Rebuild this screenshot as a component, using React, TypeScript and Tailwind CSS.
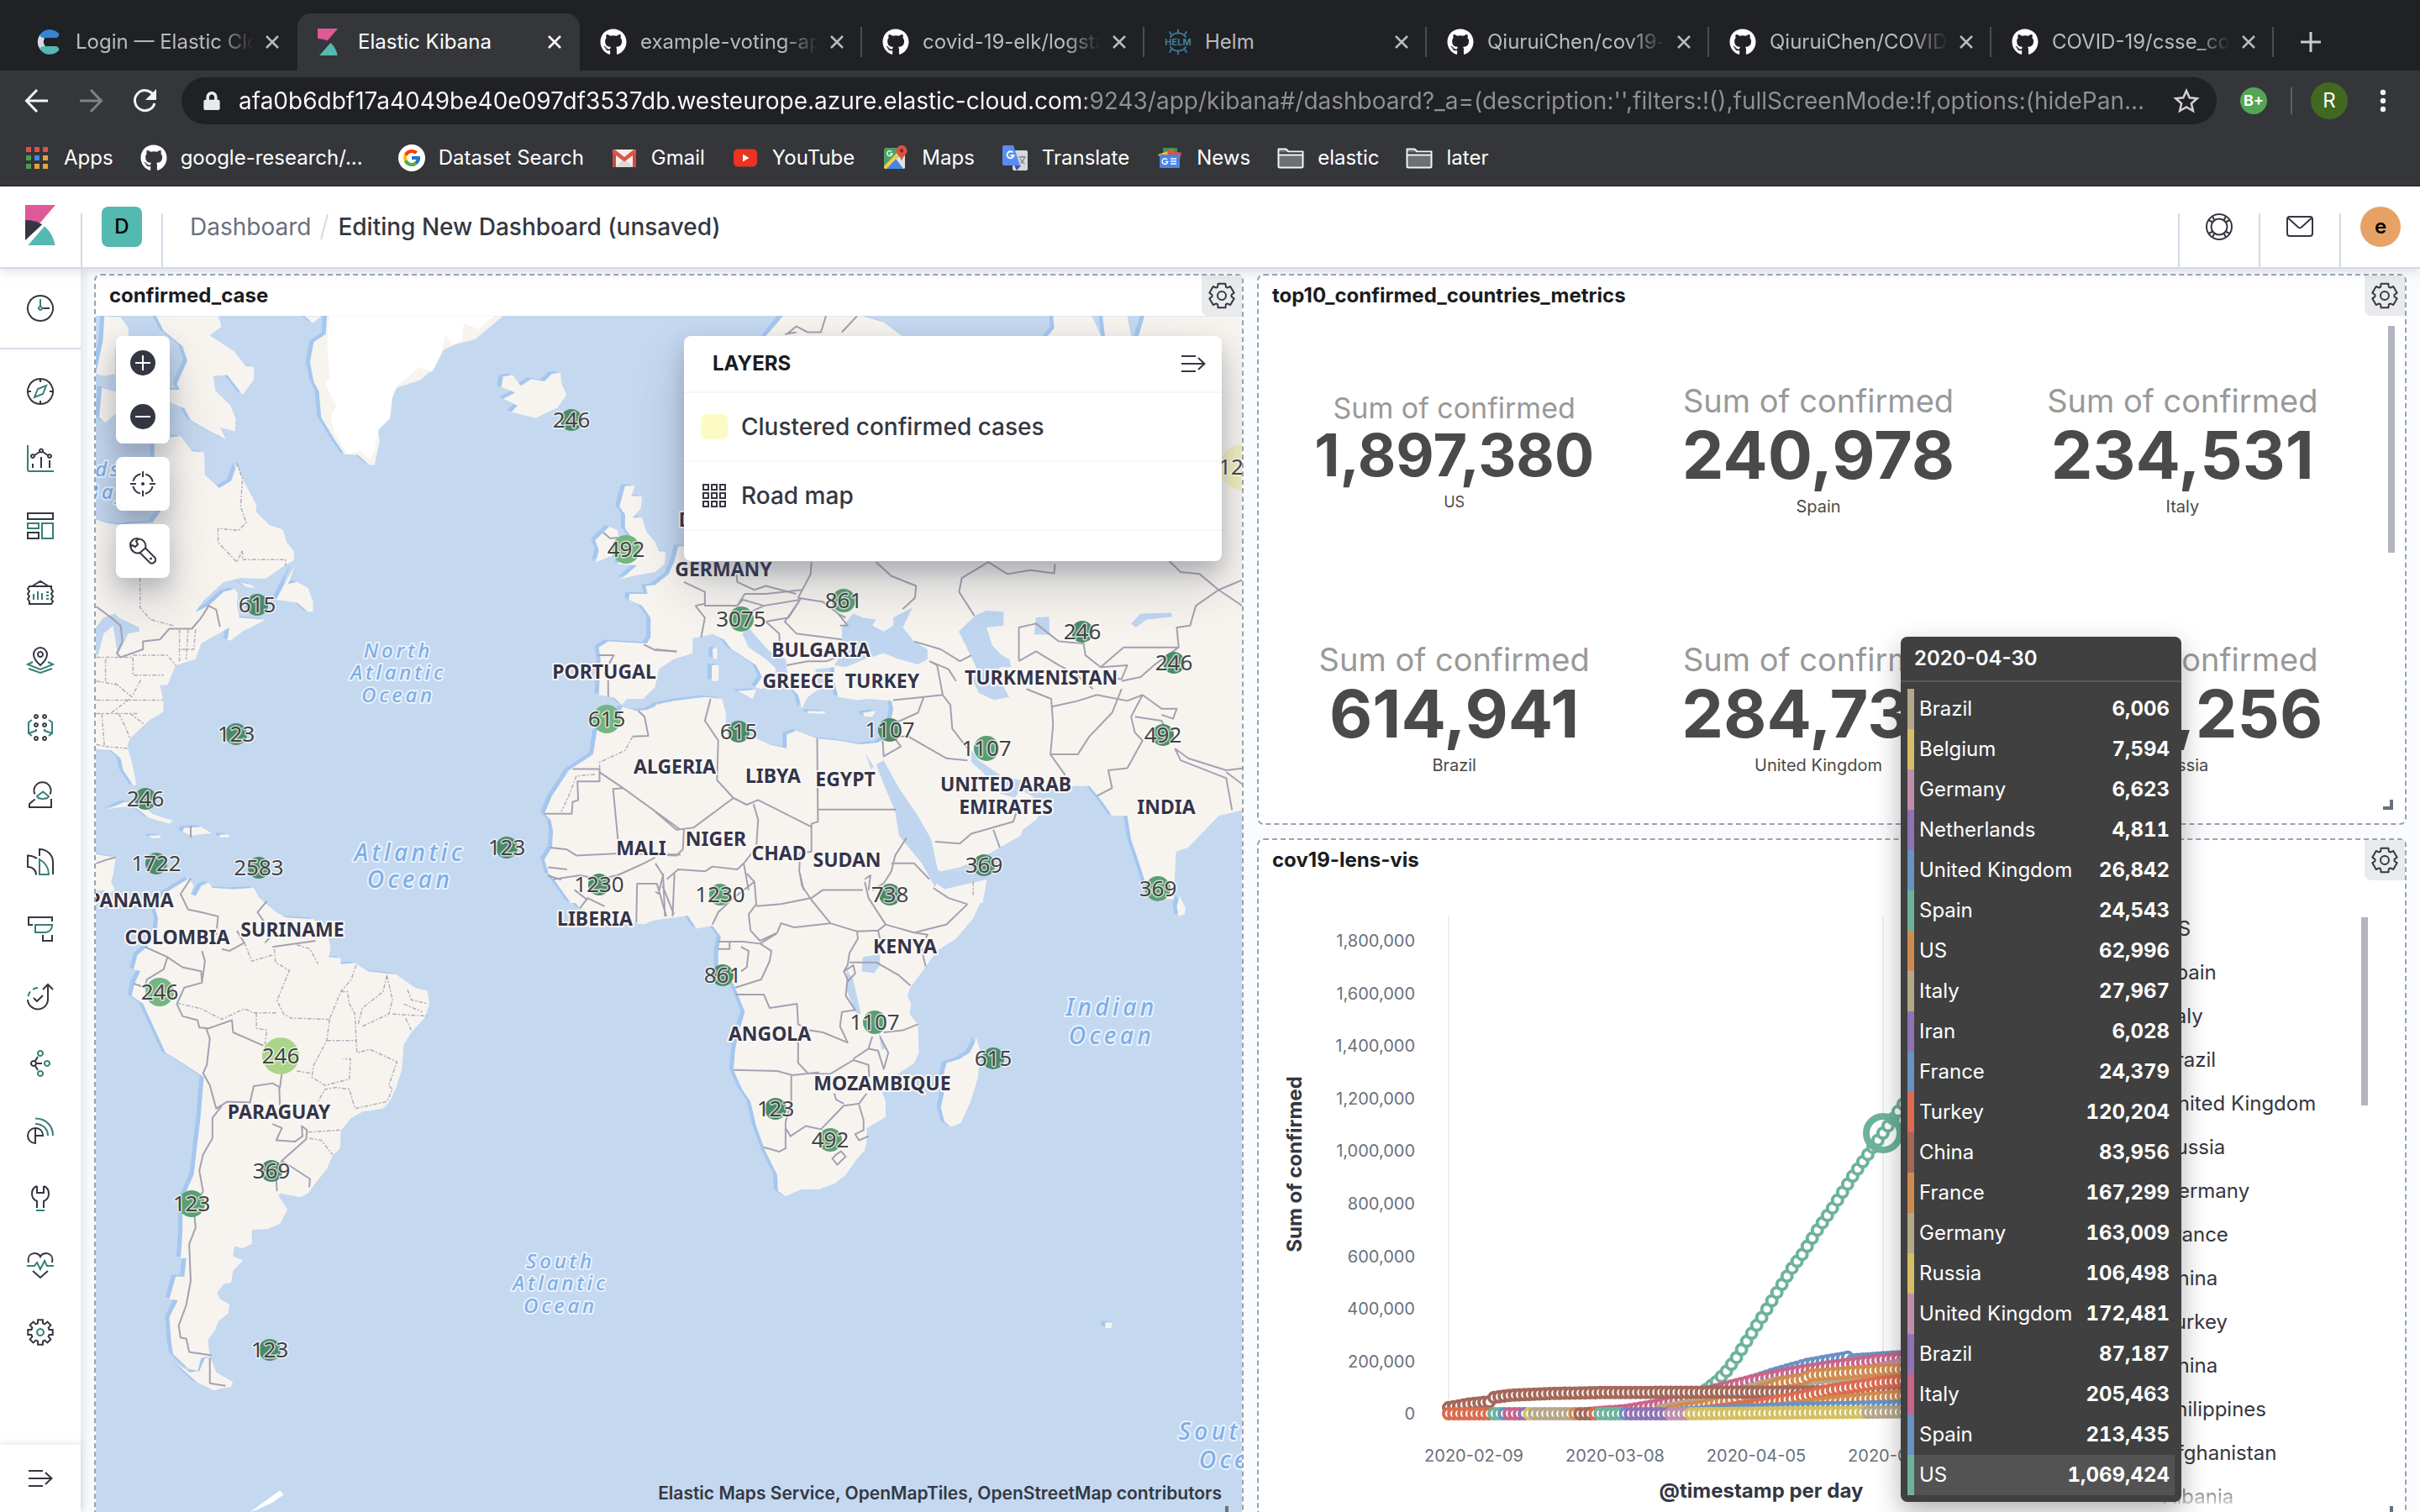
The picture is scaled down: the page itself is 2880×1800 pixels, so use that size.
import React from "react";
import { FaGithub, FaLock } from "react-icons/fa";
import { FcGoogle } from "react-icons/fc";

type Pt = [number, number];

/* ---------- browser chrome icons ---------- */

function KibanaMark({ className }: { className: string }) {
  return (
    <svg className={className} viewBox="0 0 24 32" aria-hidden="true">
      <path d="M0 0h24L0 28z" fill="#df5998" />
      <path d="M0 12v16l13.500-12.500C9.800 13.200 5 12 0 12z" fill="#343741" />
      <path d="M15.300 17L2.200 32h21.500c-1.200-6.300-4-11.500-8.400-15z" fill="#54b9b0" />
      <path d="M14.200 15.500L1.200 31" stroke="currentColor" strokeWidth="1.200" />
    </svg>
  );
}

function CloudMark() {
  return (
    <svg className="h-8 w-8" viewBox="0 0 32 32" aria-hidden="true">
      <path d="M7 6a14 14 0 0 0 0 20l5-5a7 7 0 0 1-1-9z" fill="#d3dae6" />
      <path d="M6 7c5-8 17-7 22-1 1 2-1 5-4 5H10c-3 0-5-2-4-4z" fill="#3485d6" />
      <path d="M6 25c5 8 17 7 22 1 1-2-1-5-4-5H10c-3 0-5 2-4 4z" fill="#54b9b0" />
    </svg>
  );
}

function HelmMark() {
  return (
    <svg className="h-8 w-8" viewBox="0 0 32 32" aria-hidden="true">
      <g fill="none" stroke="#3f7d9f" strokeWidth="1.800" strokeLinecap="round">
        <path d="M7 10a11 11 0 0 1 18 0M7 22a11 11 0 0 0 18 0" />
        <path d="M16 5V1.500M8 7L6 4M24 7l2-3M16 27v3.500M8 25l-2 3M24 25l2 3" />
      </g>
      <text x="16" y="20" textAnchor="middle" fontSize="11" fontWeight="700" fill="#3f7d9f" fontFamily="Inter, sans-serif">HELM</text>
    </svg>
  );
}

function AppsMark() {
  const c = ["#dd5144", "#dd5144", "#dd5144", "#4f9d55", "#4a86e8", "#e5a33b", "#4f9d55", "#e5a33b", "#e5a33b"];
  return (
    <svg className="h-8 w-8" viewBox="0 0 32 32" aria-hidden="true">
      {c.map((f, i) => (
        <rect key={i} x={3 + (i % 3) * 10} y={3 + Math.floor(i / 3) * 10} width="6" height="6" fill={f} />
      ))}
    </svg>
  );
}

function GmailMark() {
  return (
    <svg className="h-8 w-8" viewBox="0 0 32 32" aria-hidden="true">
      <rect x="2" y="6" width="28" height="21" rx="2" fill="#f1efee" />
      <path d="M16 17L27 27H5z" fill="#dcdad9" />
      <path d="M2 8v17a2 2 0 0 0 2 2h2V10zM30 8v17a2 2 0 0 1-2 2h-2V10z" fill="#d04a3c" />
      <path d="M2 7.500C2 5.500 4.500 5.500 6 7l10 8 10-8c1.500-1.500 4-1.500 4 .5L30 10 16 20.500 2 10z" fill="#dd5548" />
    </svg>
  );
}

function YouTubeMark() {
  return (
    <svg className="h-8 w-8" viewBox="0 0 32 32" aria-hidden="true">
      <rect x="2" y="5.500" width="28" height="21" rx="5" fill="#ea3323" />
      <path d="M13 11.500v9l7.500-4.500z" fill="#fff" />
    </svg>
  );
}

function MapsMark() {
  return (
    <svg className="h-8 w-8" viewBox="0 0 32 32" aria-hidden="true">
      <rect x="3" y="4" width="25" height="25" rx="2.500" fill="#4fa063" />
      <path d="M28 9v18a2 2 0 0 1-2 2L17 17z" fill="#e2e2e2" />
      <path d="M4 28.500L16 16l10 13H5z" fill="#4a86e8" />
      <path d="M3 26L22 6l3 3L6 29H5a2 2 0 0 1-2-2z" fill="#f4cf4b" />
      <path d="M24 1a6.500 6.500 0 0 1 6.500 6.500c0 4.500-5 6-6.500 12-1.500-6-6.500-7.500-6.500-12A6.500 6.500 0 0 1 24 1z" fill="#dd5144" />
      <circle cx="24" cy="7.500" r="2.200" fill="#802d27" />
      <path d="M12 8.500a3 3 0 1 0 .8 2.500H10" fill="none" stroke="#fff" strokeWidth="1.300" />
    </svg>
  );
}

function TranslateMark() {
  return (
    <svg className="h-8 w-8" viewBox="0 0 32 32" aria-hidden="true">
      <rect x="13" y="7" width="18" height="24" rx="2" fill="#d5d8dc" />
      <path d="M15 25h8l-5 6z" fill="#3355b5" />
      <path d="M3 1h11l8 24H3a2 2 0 0 1-2-2V3a2 2 0 0 1 2-2z" fill="#5a8df0" />
      <path d="M13.500 9.500A4 4 0 1 0 14.500 13H10.500" fill="none" stroke="#fff" strokeWidth="1.800" />
      <path d="M20 15h9M24.500 13v2M27.500 15c-1 4-3 6-5 7.500M22 17c1 2.500 3 4.500 5.500 6" fill="none" stroke="#7d8a99" strokeWidth="1.300" />
    </svg>
  );
}

function NewsMark() {
  return (
    <svg className="h-8 w-8" viewBox="0 0 32 32" aria-hidden="true">
      <rect x="8" y="4" width="17" height="10" rx="1" fill="#3f8f56" />
      <path d="M2 12l17-6 3 8H4z" fill="#f0b83d" />
      <path d="M13 6l17 4-2 8-14-4z" fill="#dd5144" />
      <rect x="4" y="12" width="24" height="16" rx="1.500" fill="#4a86e8" />
      <path d="M13 18a3.300 3.300 0 1 0 .7 2.500H11" fill="none" stroke="#fff" strokeWidth="1.500" />
      <path d="M17 17h7M17 20h7M17 23h7" stroke="#fff" strokeWidth="1.500" />
    </svg>
  );
}

function FolderMark() {
  return (
    <svg className="h-8 w-8" viewBox="0 0 32 32" aria-hidden="true">
      <path d="M1.500 26V5.500h9l3 3h17V26a1.500 1.500 0 0 1-1.500 1.500H3A1.500 1.500 0 0 1 1.500 26z" fill="#6e6f72" stroke="#f1f3f4" strokeWidth="2" strokeLinejoin="round" />
      <path d="M2.500 9.500h27v3h-27z" fill="#35363a" />
      <path d="M2 12.500h28" stroke="#f1f3f4" strokeWidth="2" />
    </svg>
  );
}

function GoogleMark() {
  return (
    <span className="flex h-8 w-8 items-center justify-center rounded-full bg-white">
      <FcGoogle className="h-6 w-6" />
    </span>
  );
}

/* ---------- browser chrome ---------- */

const github = <FaGithub className="h-8 w-8 text-white" />;

const tabs: { title: string; icon: React.ReactNode; active?: boolean; line?: boolean }[] = [
  { title: "Login — Elastic Cloud", icon: <CloudMark /> },
  { title: "Elastic Kibana", icon: <KibanaMark className="h-8 w-6 text-[#35363a]" />, active: true },
  { title: "example-voting-app/", icon: github, line: true },
  { title: "covid-19-elk/logstash", icon: github, line: true },
  { title: "Helm", icon: <HelmMark />, line: true },
  { title: "QiuruiChen/cov19-elk", icon: github, line: true },
  { title: "QiuruiChen/COVID-19", icon: github, line: true },
  { title: "COVID-19/csse_covid", icon: github, line: true },
];

const bookmarks: { title: string; icon: React.ReactNode }[] = [
  { title: "Apps", icon: <AppsMark /> },
  { title: "google-research/...", icon: github },
  { title: "Dataset Search", icon: <GoogleMark /> },
  { title: "Gmail", icon: <GmailMark /> },
  { title: "YouTube", icon: <YouTubeMark /> },
  { title: "Maps", icon: <MapsMark /> },
  { title: "Translate", icon: <TranslateMark /> },
  { title: "News", icon: <NewsMark /> },
  { title: "elastic", icon: <FolderMark /> },
  { title: "later", icon: <FolderMark /> },
];

function TabStrip() {
  return (
    <div className="flex h-[84px] items-end bg-[#202124] pl-[18px]">
      {tabs.map((t) => (
        <div
          key={t.title}
          className={
            "relative flex h-[68px] w-[336px] items-center pl-6 pr-4 " +
            (t.active ? "rounded-t-2xl bg-[#35363a] text-white" : "text-[#b9bbbe]")
          }
        >
          <button className="flex min-w-0 flex-1 items-center gap-4">
            <span className="flex w-8 shrink-0 items-center">{t.icon}</span>
            <span
              className={
                "min-w-0 flex-1 overflow-hidden whitespace-nowrap text-left text-2xl " +
                (t.active || t.title === "Helm" ? "" : "[mask-image:linear-gradient(90deg,#000_80%,transparent)]")
              }
            >
              {t.title}
            </span>
          </button>
          <button aria-label={"Close " + t.title} className="flex w-9 justify-end pr-1">
            <svg className="h-5 w-5" viewBox="0 0 20 20" aria-hidden="true">
              <path d="M3 3l14 14M17 3L3 17" stroke="currentColor" strokeWidth="2.500" />
            </svg>
          </button>
          {t.line && <span className="absolute right-0 top-4 h-9 w-0.5 bg-[#4b4c50]" />}
        </div>
      ))}
      <button aria-label="New tab" className="ml-8 flex h-[68px] items-center text-[#c9cbce]">
        <svg className="h-6 w-6" viewBox="0 0 24 24" aria-hidden="true">
          <path d="M12 0v24M0 12h24" stroke="currentColor" strokeWidth="3" />
        </svg>
      </button>
    </div>
  );
}

function Toolbar() {
  return (
    <div className="flex h-[72px] items-center bg-[#35363a] pl-7 pr-7 text-white">
      <button aria-label="Back" className="w-16">
        <svg className="h-8 w-8" viewBox="0 0 32 32" aria-hidden="true">
          <path d="M29 16H4M16 3L3.500 16 16 29" fill="none" stroke="#f1f3f4" strokeWidth="3" />
        </svg>
      </button>
      <button aria-label="Forward" className="w-16">
        <svg className="h-8 w-8" viewBox="0 0 32 32" aria-hidden="true">
          <path d="M3 16h25M16 3l12.500 13L16 29" fill="none" stroke="#808184" strokeWidth="3" />
        </svg>
      </button>
      <button aria-label="Reload" className="w-15">
        <svg className="h-8 w-8" viewBox="0 0 32 32" aria-hidden="true">
          <path d="M26.500 9A12 12 0 1 0 28 19" fill="none" stroke="#f1f3f4" strokeWidth="3" />
          <path d="M30 2v13H17z" fill="#f1f3f4" />
        </svg>
      </button>
      <div className="flex h-14 flex-1 items-center rounded-full bg-[#202124] pl-6 pr-5">
        <FaLock className="h-[22px] w-6 shrink-0 text-[#e8eaed]" />
        <input
          aria-label="Address and search bar"
          className="ml-5 min-w-0 flex-1 bg-[linear-gradient(90deg,#ffffff_1008px,#8f9194_1008px)] bg-clip-text text-[28px] leading-[48px] text-transparent outline-none"
          defaultValue="afa0b6dbf17a4049be40e097df3537db.westeurope.azure.elastic-cloud.com:9243/app/kibana#/dashboard?_a=(description:'',filters:!(),fullScreenMode:!f,options:(hidePan..."
        />
        <button aria-label="Bookmark this page" className="ml-7">
          <svg className="h-8 w-8" viewBox="0 0 32 32" aria-hidden="true">
            <path d="M16 4l3.700 8.300 9 .9-6.800 6 2 8.800L16 23.400 8.100 28l2-8.800-6.800-6 9-.9z" fill="none" stroke="#d0d1d3" strokeWidth="2.500" />
          </svg>
        </button>
      </div>
      <button aria-label="Extension" className="ml-7 flex h-8 w-8 items-center justify-center rounded-full bg-[#55a556] text-lg font-bold">B+</button>
      <span className="ml-7 h-8 w-0.5 bg-[#5f6064]" />
      <button aria-label="Profile" className="ml-[22px] flex h-11 w-11 items-center justify-center rounded-full bg-[#41691f] text-2xl">R</button>
      <button aria-label="Menu" className="ml-[26px]">
        <svg className="h-8 w-8" viewBox="0 0 32 32" aria-hidden="true">
          <g fill="#f1f3f4">
            <circle cx="16" cy="6" r="3.200" />
            <circle cx="16" cy="16" r="3.200" />
            <circle cx="16" cy="26" r="3.200" />
          </g>
        </svg>
      </button>
    </div>
  );
}

function Bookmarks() {
  return (
    <div className="flex h-[66px] items-center gap-8 border-b-2 border-[#27252a] bg-[#35363a] pl-7 text-white">
      {bookmarks.map((b) => (
        <a
          key={b.title}
          href="#"
          className={"flex items-center gap-4 whitespace-nowrap text-2xl " + (b.title.endsWith("...") ? "pr-2.5" : "")}
        >
          {b.icon}
          {b.title}
        </a>
      ))}
    </div>
  );
}

/* ---------- Kibana shell ---------- */

function KibanaHeader() {
  return (
    <header className="relative z-10 flex h-[98px] border-b-2 border-[#d3dae6] bg-white shadow-[0_4px_12px_rgba(152,162,179,0.3)]">
      <a href="#" aria-label="Kibana home" className="flex w-24 justify-center pt-[22px]">
        <KibanaMark className="h-12 w-9 text-white" />
      </a>
      <span className="mt-8 w-0.5 bg-[#d3dae6]" />
      <div className="flex w-[94px] justify-center pt-6">
        <button aria-label="Spaces" className="h-12 w-12 rounded-lg bg-[#54b9b0] text-2xl font-medium text-black">D</button>
      </div>
      <span className="mt-8 w-0.5 bg-[#d3dae6]" />
      <nav aria-label="Breadcrumb" className="flex h-24 flex-1 items-center gap-2.5 pl-8 text-[28px]">
        <a href="#" className="text-[#69707d]">Dashboard</a>
        <svg className="h-8 w-3" viewBox="0 0 12 32" aria-hidden="true">
          <path d="M10 1L2 31" stroke="#d3dae6" strokeWidth="2" />
        </svg>
        <span className="font-medium text-[#343741]">Editing New Dashboard (unsaved)</span>
      </nav>
      <span className="mt-8 w-0.5 bg-[#d3dae6]" />
      <button aria-label="Help" className="flex w-[94px] items-center justify-center">
        <svg className="h-8 w-8" viewBox="0 0 32 32" aria-hidden="true">
          <g fill="none" stroke="#343741" strokeWidth="2">
            <circle cx="16" cy="16" r="15" />
            <circle cx="16" cy="16" r="9.500" />
            <path d="M3.500 8l5 2.500M8 3.500l2.500 5M28.500 8l-5 2.500M24 3.500l-2.500 5M3.500 24l5-2.500M8 28.500l2.500-5M28.500 24l-5-2.500M24 28.500l-2.500-5" />
          </g>
        </svg>
      </button>
      <span className="mt-8 w-0.5 bg-[#d3dae6]" />
      <button aria-label="Newsfeed" className="flex w-[94px] items-center justify-center">
        <svg className="h-8 w-8" viewBox="0 0 32 32" aria-hidden="true">
          <g fill="none" stroke="#343741" strokeWidth="2">
            <rect x="1" y="4" width="30" height="23" rx="3" />
            <path d="M2 5.500L14 16.500c1.200 1 2.800 1 4 0L30 5.500" />
          </g>
        </svg>
      </button>
      <span className="mt-8 w-0.5 bg-[#d3dae6]" />
      <div className="flex w-[94px] items-center justify-center">
        <button aria-label="Account menu" className="h-12 w-12 rounded-full bg-[#e7a366] text-2xl font-semibold text-black">e</button>
      </div>
    </header>
  );
}

function gearPath(teeth: number, c: number, outer: number, inner: number, w: number, v: number) {
  let d = "";
  for (let i = 0; i < teeth; i++) {
    const a = (i * 360) / teeth - 90;
    const pts: Pt[] = [[a - v, inner], [a - w, outer], [a + w, outer], [a + v, inner]];
    pts.forEach(([deg, r]) => {
      const t = (deg * Math.PI) / 180;
      d += (d ? "L" : "M") + (c + r * Math.cos(t)).toFixed(1) + " " + (c + r * Math.sin(t)).toFixed(1);
    });
  }
  return d + "Z";
}

const panelGear = gearPath(6, 16, 15, 11.5, 17, 25);
const navGear = gearPath(8, 16, 15, 11, 11, 16);

const navIcons: { label: string; dark: string; teal: string }[] = [
  { label: "Discover", dark: "M16 1a15 15 0 1 0 .01 0M16 1v4M16 27v4M1 16h4M27 16h4", teal: "M9 23l4-10 10-4-4 10z" },
  { label: "Visualize", dark: "M7 22v5M17 14v13M27 18v9M9 12l6-4M19 8l6 4M7 11a2 2 0 1 0 .01 0M17 4.500a2 2 0 1 0 .01 0M27 11a2 2 0 1 0 .01 0", teal: "M1 0v29a2 2 0 0 0 2 2h29" },
  { label: "Dashboard", dark: "M1 1h30v7H1zM1 24h13v7H1z", teal: "M1 13h13v6H1zM18 13h13v18H18z" },
  { label: "Canvas", dark: "M3 8h26v3l2 3-2 3 2 3-2 3 2 3-2 3H3v-3l-2-3 2-3-2-3 2-3-2-3zM6 8l10-6 10 6", teal: "M8 17v7M13 14v10M18 16v8M23 15h3M23 19h3M23 23h3" },
  { label: "Maps", dark: "M16 1a8 8 0 0 1 8 8c0 6-8 13-8 13S8 15 8 9a8 8 0 0 1 8-8zM16 6a3 3 0 1 0 .01 0", teal: "M7 18l-6 3 15 6 15-6-6-3M2 26l14 5 14-5" },
  { label: "Machine Learning", dark: "M11 1a2 2 0 1 0 .01 0M21 1a2 2 0 1 0 .01 0M11 11a2 2 0 1 0 .01 0M21 11a2 2 0 1 0 .01 0M11 27a2 2 0 1 0 .01 0M21 27a2 2 0 1 0 .01 0", teal: "M6 7l-4 3v13l4 3M2 23l9-3v-2M26 7l4 3v13l-4 3M30 23l-9-3v-2" },
  { label: "Metrics", dark: "M9.500 15.500a10 10 0 1 1 18 0M9.500 21.500L3 27v4h26V21", teal: "M12 18l7-5.500 7 5.500c-2 4-12 4-14 0z" },
  { label: "Logs", dark: "M15 9V1c9 0 16 7 16 15v15M12 12C9 10 5 8.500 1 8.500V22c6 0 10 4 10 9.500", teal: "M15 13c7 4 11 10 11 18H15z" },
  { label: "APM", dark: "M7 11H2V2h28v5M19 23v7h11v-7", teal: "M10 11h20c0 6-4 9-9 9H10z" },
  { label: "Uptime", dark: "M1 20a12 12 0 0 0 24-1V2M19 8l6-6 6 6M8 18l4 4 7-7", teal: "M1.500 16c.3-2 1-4 2.500-5.500M7 8c2-1.500 4-2 6-2" },
  { label: "Graph", dark: "M8 13a3 3 0 1 0 .01 0M11 16h7M10 13l3-5M10 19l3 5", teal: "M16 1a3 3 0 1 0 .01 0M24 13a3 3 0 1 0 .01 0M16 25a3 3 0 1 0 .01 0" },
  { label: "SIEM", dark: "M10 13v18a9 9 0 1 1 0-18c6 0 9 4 9 9H10", teal: "M10 8c9 0 15 6 15 14M10 1.500c13 0 21 9 21 20.500" },
  { label: "Dev Tools", dark: "M12 2C4 5 4 17 12 20v8M20 2c8 3 8 15 0 18v8M12 2v8h8V2", teal: "M11 31h10" },
  { label: "Stack Monitoring", dark: "M2 13C-1 1 13-1 16 6 19-1 33 1 30 13M7 23l9 8 9-8", teal: "M0 17h9l3-4 4 8 5-10 3 6h8" },
  { label: "Management", dark: navGear, teal: "M16 12a4 4 0 1 0 .01 0" },
];

function NavIcon({ dark, teal }: { dark: string; teal: string }) {
  return (
    <svg className="h-8 w-8 overflow-visible" viewBox="0 0 32 32" fill="none" strokeWidth="2" aria-hidden="true">
      <path d={dark} stroke="#343741" />
      <path d={teal} stroke="#387f78" />
    </svg>
  );
}

function CollapseIcon({ className }: { className: string }) {
  return (
    <svg className={className} viewBox="0 0 32 32" fill="none" stroke="#343741" strokeWidth="2" aria-hidden="true">
      <path d="M2 7h17M2 16h27M2 25h17M22 9l7.500 7L22 23" />
    </svg>
  );
}

function Sidebar() {
  return (
    <aside className="z-[5] flex w-24 shrink-0 flex-col bg-white shadow-[4px_0_10px_rgba(152,162,179,0.25)]">
      <button aria-label="Recently viewed" className="flex h-24 items-center justify-center border-b-2 border-[#d8dde8]">
        <NavIcon dark="M16 1a15 15 0 1 0 .01 0M18 16h9" teal="M16 5v9a2 2 0 1 0 .01 0M18 16h2" />
      </button>
      <nav aria-label="Primary" className="flex flex-1 flex-col pt-[10px]">
        {navIcons.map((n) => (
          <a key={n.label} href="#" aria-label={n.label} className="flex h-20 items-center justify-center">
            <NavIcon dark={n.dark} teal={n.teal} />
          </a>
        ))}
      </nav>
      <button aria-label="Expand navigation" className="flex h-20 items-center justify-center shadow-[0_-2px_6px_rgba(152,162,179,0.25)]">
        <CollapseIcon className="h-8 w-8" />
      </button>
    </aside>
  );
}

function Panel({ title, className, children }: { title: string; className: string; children: React.ReactNode }) {
  return (
    <section className={"relative flex flex-col rounded-lg border-2 border-dashed border-[#98a2b3] bg-white " + className}>
      <div className="flex h-12 shrink-0 items-stretch justify-between pl-4">
        <h2 className="text-2xl font-bold leading-[48px] text-[#1a1c21]">{title}</h2>
        <button aria-label={"Options for " + title} className="flex w-12 items-center justify-center rounded-bl-lg bg-[#e9eaec]">
          <svg className="h-8 w-8" viewBox="0 0 32 32" fill="none" stroke="#343741" strokeWidth="2" strokeLinejoin="round" aria-hidden="true">
            <path d={panelGear} />
            <circle cx="16" cy="16" r="5" />
          </svg>
        </button>
      </div>
      {children}
    </section>
  );
}

/* ---------- map ---------- */

const T_NW = "translate(110 320) scale(0.4464 0.4719)";
const T_NE = "translate(780 320) scale(0.4529 0.4719)";
const T_SW = "translate(110 1040) scale(0.4464 0.4847)";
const T_SE = "translate(780 1040) scale(0.4529 0.4847)";

const land: [string, string][] = [
  [T_NW, "M170 119L190 157L240 195L253 232L225 290L233 305L205 305L205 337L245 352L262 382L310 408L356 430L340 400L380 410L382 378L368 345L328 308L322 270L360 268L400 318L430 280L431 248L408 245L378 208L312 168L344 146L336 119Z"],
  [T_NW, "M32 119L75 122L96 150L96 180L60 200L60 265L30 270L9 265L28 180ZM25 300L63 310L63 365L35 388L18 375Z"],
  [T_NW, "M9 632Q60 650 100 643L160 640L190 600L165 560L165 440L205 425L235 422L265 460L298 463L300 520L338 553L370 535L385 495L400 530L438 597L435 612L470 645L508 658L518 690L537 712L538 735L510 750L462 782L395 780L350 790L295 838L275 866L310 850L350 815L380 808L388 820L385 850L392 880L462 885L400 915L368 938L360 935L365 905L290 945L275 985L222 1000L200 1050L180 1050L189 1090L189 1118L150 1140L100 1185L93 1205L105 1245L117 1300L110 1305L82 1265L75 1235L50 1215L0 1210L0 632Z"],
  [T_NW, "M540 747L515 790L490 835L545 842L575 865L588 865L588 840L575 805L545 790L522 795ZM390 790L425 798L432 806L410 802Z"],
  [T_NW, "M38 1365L85 1345L130 1350L160 1375L215 1392L205 1400L150 1385L110 1355L60 1360ZM245 1410L290 1408L318 1424L262 1430L240 1420ZM340 1427h24v7h-24zM150 1430l30 0l3 6l-24 0zM0 1475L62 1485L55 1530L35 1560L55 1568L0 1568Z"],
  [T_NW, "M625 119L1095 119L1020 178L970 190L935 205L912 250L875 280L812 300L800 320L795 375L762 408L766 435L752 495L738 495L708 470L672 468L648 435L610 375L604 310L590 285L580 235L590 185L622 165ZM565 119L610 119L588 137Z"],
  [T_NW, "M1095 272L1120 268L1142 295L1170 278L1205 284L1225 265L1248 263L1250 288L1264 318L1240 350L1182 376L1117 362L1133 345L1095 328L1127 312L1090 298Z"],
  [T_NW, "M1420 548L1446 548L1437 572L1465 575L1462 605L1440 628L1465 628L1478 665L1500 690L1510 712L1528 715L1525 745L1500 765L1440 775L1410 783L1435 762L1452 748L1400 745L1430 715L1440 680L1420 655L1420 620L1405 600L1415 565ZM1378 650L1400 660L1405 690L1395 720L1342 740L1350 710L1340 685L1362 665Z"],
  [T_NW, "M1600 740L1568 762L1545 775L1530 795L1475 800L1480 820L1432 820L1430 835L1465 850L1488 880L1488 930L1478 945L1375 940L1350 955L1355 990L1350 1075L1390 1082L1412 1100L1425 1085L1468 1085L1500 1055L1510 1010L1550 985L1600 970Z"],
  [T_NW, "M1412 1105L1450 1115L1480 1112L1510 1100L1600 1088L1600 1600L1275 1600L1215 1520L1205 1490L1225 1460L1228 1420L1222 1390L1205 1375L1225 1330L1270 1265L1335 1225L1345 1165L1400 1140Z"],
  [T_NE, "M60 700L50 737L35 770L0 797L0 1012L15 985L50 972L70 935L110 930L150 922L180 935L200 960L240 985L265 1000L280 1030L262 1055L278 1060L310 1045L318 1000L345 1010L350 1050L375 1075L385 1110L400 1080L430 1060L420 1010L470 1005L470 1040L480 1080L530 1088L560 1085L620 1090L625 1110L610 1180L585 1195L540 1200L480 1190L425 1185L370 1165L345 1175L345 1210L300 1200L255 1180L185 1155L185 1120L175 1085L130 1080L50 1090L0 1100L0 1600L860 1600L870 1541L800 1550L760 1560L735 1530L738 1515L750 1520L800 1510L850 1490L905 1460L960 1430L965 1415L1000 1390L1012 1372L1020 1350L975 1322L985 1302L1070 1305L1140 1305L1175 1345L1200 1380L1240 1380L1250 1440L1275 1510L1300 1590L1362 1590L1368 1470L1400 1460L1480 1380L1545 1365L1545 700Z"],
  [T_NE, "M335 119L290 170L290 200L680 200L645 168L600 135L545 119ZM1045 119L1048 150L1030 170L1030 200L1185 200L1150 125L1145 119ZM1175 119L1185 200L1250 170L1240 119ZM1285 119L1260 200L1480 200L1480 740L1545 740L1545 119Z"],
  [T_NE, "M150 960l12 -5l0 30l-10 -2zM148 1000l18 0l0 40l-18 0zM215 1065L265 1062L255 1085ZM400 1115l45 2l0 6l-45 -2zM545 1120l35 -5l-10 15l-20 0zM0 710L27 722L10 750L0 755Z"],
  [T_SW, "M225 30L258 12L270 30L262 50L275 55L290 30L310 22L320 35L375 38L430 35L445 60L490 95L515 108L590 112L630 160L635 180L630 205L662 208L662 222L700 220L735 240L810 248L860 280L893 288L899 320L885 355L850 390L830 420L825 480L810 525L792 560L775 577L720 585L690 600L662 632L660 675L640 692L625 725L595 760L575 785L555 795L500 785L495 790L520 825L500 860L465 873L425 875L425 910L400 920L378 915L375 940L402 950L375 975L370 1005L350 1008L332 1030L340 1045L365 1058L362 1080L335 1100L328 1120L308 1145L312 1180L318 1185L290 1190L280 1222L255 1215L215 1180L210 1150L205 1090L228 1048L205 1045L222 990L245 990L250 945L235 945L240 880L240 800L270 740L280 660L288 600L297 500L240 465L195 440L165 380L135 320L105 300L112 270L128 240L110 235L120 200L145 180L172 140L175 110L165 80L190 50Z"],
  [T_SW, "M315 1190L330 1225L374 1248L370 1260L340 1265L325 1270L280 1250L225 1205L260 1225L285 1222L300 1190ZM0 0L55 0L50 20L60 40L40 50L20 30L0 20Z"],
  [T_SW, "M1215 0L1250 20L1275 60L1300 85L1380 120L1440 120L1470 125L1510 110L1580 98V-10H1215Z"],
  [T_SE, "M-6 -5L700 0L718 30L760 38L870 15L865 50L835 110L790 160L740 190L705 235L670 280L662 300L672 320L668 345L690 370L692 440L680 465L625 500L595 535L605 560L605 598L555 625L555 660L550 680L530 700L500 740L470 762L430 775L385 775L342 792L322 780L320 740L288 680L265 620L250 560L228 530L205 482L210 430L222 380L235 340L220 305L205 270L165 240L165 190L172 155L150 128L108 135L85 103L-6 115Z"],
  [T_SE, "M843 402L852 430L848 500L828 560L803 612L778 622L760 610L750 575L758 540L755 500L765 465L800 455L825 440L840 415ZM1378 55L1393 85L1390 100L1375 105L1370 80ZM1295 0L1310 50L1325 70L1345 60L1363 30L1362 0ZM1182 1102l18 2l-2 12l-16 0z"],
];

const ice: [string, string][] = [
  [T_NW, "M632 119L1070 119L1030 152L990 138L985 180L960 192L940 165L930 215L905 260L870 248L845 270L812 295L798 330L790 380L762 405L752 460L740 480L715 460L680 468L645 415L635 375L650 345L620 290L632 275L626 190Z"],
  [T_SW, "M420 1568L455 1545L500 1515L510 1525L480 1545L440 1562Z"],
];

const water: [string, string][] = [
  [T_NW, "M9 905L30 880L60 870L70 880L125 905L125 915L95 920L70 970L65 960L55 900L30 920L15 975L9 975Z"],
  [T_NE, "M490 905L520 870L545 880L580 885L570 900L600 915L625 900L625 880L675 855L660 885L650 905L680 940L715 960L715 985L690 998L640 985L600 970L550 985L500 1005L470 1000L490 970Z"],
  [T_NE, "M840 875L870 862L915 865L915 900L870 905L885 950L910 975L930 985L935 1005L905 1005L900 1030L930 1080L890 1088L850 1070L835 1040L845 1010L820 960L797 915ZM1000 880l35 -2l0 45l-40 0zM1250 895L1275 870L1355 868L1358 878L1290 885L1262 905Z"],
  [T_NE, "M580 1250L600 1240L640 1310L690 1380L725 1440L745 1530L735 1560L700 1500L640 1430L630 1370L600 1300ZM552 1222l22 35l-8 5z"],
  [T_NE, "M245 905L262 925L300 965L343 985L345 1020L318 1010L290 985L245 955L228 920ZM830 1215L850 1240L910 1280L960 1290L985 1302L978 1325L960 1312L945 1335L895 1320L860 1270L830 1245Z"],
  [T_SE, "M545 205L590 198L590 225L575 245L542 240ZM503 235L520 262L540 345L528 345L500 280ZM585 385L605 430L595 432Z"],
  [T_SE, "M735 0L870 -8L868 15L760 38L738 25Z"],
];

const borders: [string, string][] = [
  [T_NW, "M10 852L50 880L75 900L80 940L65 970L75 980L135 960L135 940L180 935L205 908L265 908L290 880L310 850L330 860L340 903M1205 1375L1278 1375L1280 1345L1295 1340L1293 1293L1352 1293L1352 1262L1280 1262M1352 1270L1415 1310L1568 1415M1402 1450L1388 1312L1415 1310M1455 1115L1472 1130L1482 1178L1440 1180M1350 975L1390 975L1375 1000L1375 1080M1470 948L1500 962L1558 965M1220 1460L1265 1465L1290 1480L1405 1475L1568 1478M1215 1510L1265 1515M1230 1540L1300 1530L1350 1540L1400 1530L1470 1500L1500 1485M1362 665L1380 680L1400 678M262 1405V1435M10 1500L40 1490L62 1485"],
  [T_NE, "M145 1085L130 1140L165 1190L162 1290L205 1335L100 1410L55 1415L0 1370M425 1185L427 1395L410 1400L410 1470L380 1475L378 1520L390 1568M205 1335L240 1352L270 1340L410 1408M427 1364L632 1364M258 1350L270 1390L265 1460L232 1500L215 1515L150 1508L130 1520L60 1515L30 1540M75 1415L72 1465L55 1480L0 1478M232 1500L245 1568M0 1500L20 1530L10 1568"],
  [T_NE, "M660 1435L630 1480L620 1520L600 1550L570 1568M620 1500L680 1500L720 1540M735 1445L800 1450L830 1425L940 1395L960 1340M888 1415L905 1460M625 1088L705 1080L755 1075L775 1100L780 1160L820 1210M705 1080L690 1120L620 1150L640 1180L665 1180L765 1235L820 1240M597 1190L600 1230L645 1205L625 1180M755 1075L740 1000L720 990M720 990L770 1010L790 1040M560 1568L565 1530L550 1540"],
  [T_NE, "M975 1060L1040 1085L1045 1150L1038 1225L1075 1275L1080 1305M1038 1225L1110 1225L1140 1180L1200 1120L1225 1060M1040 1105L1110 1090L1160 1075L1240 1090L1280 1075M955 990L955 905L1000 895L1060 940L1125 945L1130 975L1170 1005L1230 955L1310 955L1375 955L1370 905L1405 900L1420 850L1480 810L1542 850M955 990L1000 965L1060 1000L1100 1020L1150 1060M1170 1005L1240 1000L1225 1035L1180 1030M1225 1040L1275 1030L1310 1000L1375 955"],
  [T_NE, "M1350 737L1380 765L1430 770L1480 810L1542 785M838 875L798 815L805 780L875 740L925 770L985 760L1048 768L1050 745M580 740L620 775L685 800L682 830L650 858M410 740L408 770L375 830L440 840L480 870L500 880M75 790L130 815L130 850L215 850L235 820L290 820L385 810M105 850L130 880L120 930M105 850L130 845M285 850L380 835L350 880L290 890L325 920L330 980M380 835L340 890L370 920L490 935M345 1000L400 990L450 990L490 975M0 960L55 965M680 940L750 960L800 990L830 975M210 740L215 790L260 810L290 800L370 820M240 870L285 850L230 835L215 850"],
  [T_NE, "M480 870L505 900L485 900M345 165L370 145L400 160L435 160L448 119M530 119L490 160M340 165L370 160M1280 1075L1250 1130L1260 1170L1280 1190L1240 1260L1190 1265L1200 1310L1160 1330M1365 1210L1400 1235L1500 1265L1542 1260M1365 1210L1380 1240L1500 1285L1515 1365M1500 1270L1542 1300M1280 1075L1330 1110L1370 1110L1360 1135L1330 1125M1260 1130L1330 1140L1350 1180"],
  [T_SW, "M262 12L235 50L255 88L290 95L335 105L330 150M465 68L440 95L455 115L480 150L460 170M345 185L365 190L405 170L385 140M480 180L595 165M140 180L200 205L240 230L290 240L292 268L245 280L225 320L240 350L280 360L285 378L310 380L372 360L375 390L455 422M200 205L190 235L145 260L140 280L110 270M292 268L300 215L292 190M303 380L313 405L305 470L295 490L313 520L330 577L345 570L320 600L320 650L295 690L285 730L295 780L270 820L275 870L258 910L262 1000L250 1060L230 1110L235 1140L250 1142L258 1175L318 1183M313 1190V1252L355 1258M330 577L360 560L420 562L430 522L480 515L500 525L505 490M498 525L500 570M480 615L505 625L490 655L540 658L560 645L558 620L572 630L570 652L505 705L580 750L578 770M505 705L490 750L492 780"],
  [T_SW, "M1450 120L1452 25L1505 25L1530 105M1520 30L1550 100M1300 85L1320 60L1365 80M1285 40L1320 65M1215 5L1250 15"],
  [T_SE, "M20 0L25 105M50 0L45 105M0 45L10 50M150 125L165 95L205 60L260 20L240 0M260 20L265 75L245 100L250 140L275 165L320 145L330 122L365 132L460 122L410 65L385 30L380 0M460 122L530 142L585 140L605 125L560 60L550 20M265 80L330 75L410 60L440 40L545 40M605 125L680 145L765 125L820 75M730 35L770 60L820 75M680 145L715 150L698 180L710 228M585 140L590 160M530 142L532 160L510 195L505 225L495 240L505 260L500 300L525 335L490 340L485 375L505 415L440 390L405 385L375 370L372 320L300 330L285 297L210 297M510 218H580L640 250L670 275M165 167H230L275 172L318 148M275 172L305 190L300 215L278 260L210 280M165 185H195V168M225 180L245 190L240 230L225 240"],
  [T_SE, "M375 410V465L400 490L460 492L520 458L560 470L562 500M205 482L320 485L360 495L430 488M357 495L357 560L342 610L342 675L325 683L285 672M342 625L355 645L395 620L435 628L495 570L535 565L555 540M470 540L475 555L495 565M535 568L547 605L547 630L525 640L535 655L560 645M475 690L465 700L478 715L500 695L488 682ZM520 455L560 430L585 435L600 480L612 440L590 400M600 390L650 385L690 370M560 430L570 400M495 240L520 225L525 245L505 265"],
];

const dashed: [string, string][] = [
  [T_NW, "M127 780V855L155 885L215 900M385 490L400 530L395 600L410 640L390 660L335 655L335 690L385 740L400 710L400 734H515V750M10 980H108V1025H190M35 985V1040M10 1088H189M10 1122H120M25 1122L32 1205M108 975H200L222 1000M232 910V995M275 910L270 960L235 960M255 910L250 985M60 1045L105 1080L130 1035M10 1040L70 1050M10 1200L35 1205L93 1210M70 1122L90 1160L100 1185M100 1122L140 1150M50 1120L100 1085"],
  [T_NW, "M1440 1180L1420 1215L1352 1245V1262M1340 1275L1290 1280L1270 1330L1250 1370"],
  [T_SW, "M405 170L425 215L480 200M485 185L488 218L525 238L492 312L510 345L530 355L632 358M225 318L290 332L345 358L405 332L430 342H492M437 342V380L465 385L460 420M632 358L625 410L590 470L585 500L620 520L685 505L688 455H668M703 225L690 260L662 290L632 358M662 290L680 290L685 320L700 345L705 440L740 432L812 462L790 520L800 530L785 560L700 577L685 530L650 525L620 530L600 562M785 250L775 290L720 330L708 372M785 250L800 310L790 345L720 375M625 410H705M545 485L580 490M575 635L660 630M578 650L610 655L640 690M545 175L580 185L602 222M840 285L850 310L895 320M800 345L895 350M830 320L880 340M835 355L850 385"],
  [T_SE, "M835 20V55"],
];

const countries: [number, number, string][] = [
  [719, 800, "PORTUGAL"], [861, 678, "GERMANY"], [977, 774, "BULGARIA"], [950, 811, "GREECE"], [1050, 811, "TURKEY"],
  [1239, 807, "TURKMENISTAN"], [803, 913, "ALGERIA"], [920, 924, "LIBYA"], [1006, 928, "EGYPT"], [1197, 934, "UNITED ARAB"],
  [1197, 961, "EMIRATES"], [1388, 961, "INDIA"], [763, 1010, "MALI"], [852, 999, "NIGER"], [927, 1016, "CHAD"],
  [1008, 1024, "SUDAN"], [708, 1094, "LIBERIA"], [1077, 1127, "KENYA"], [916, 1231, "ANGOLA"], [1050, 1290, "MOZAMBIQUE"],
  [156, 1072, "PANAMA"], [211, 1116, "COLOMBIA"], [348, 1107, "SURINAME"], [332, 1324, "PARAGUAY"], [866, 619, "DENMARK"],
];

const oceans: [number, number, string, number][] = [
  [474, 774, "North", 24], [474, 800, "Atlantic", 24], [474, 827, "Ocean", 24],
  [488, 1015, "Atlantic", 28], [488, 1047, "Ocean", 28],
  [1323, 1199, "Indian", 28], [1323, 1233, "Ocean", 28],
  [667, 1501, "South", 24], [667, 1527, "Atlantic", 24], [667, 1554, "Ocean", 24],
  [1478, 1704, "Southern", 28], [1478, 1738, "Ocean", 28],
  [128, 558, "Hudson", 24], [128, 585, "Bay", 24],
];

const DK = "#4a8a69";
const MD = "#5a9f72";
const LT = "#74b581";

const clusters: [number, number, string, number, string][] = [
  [680, 500, "246", 13, DK], [745, 654, "492", 17, LT], [306, 720, "615", 13, DK], [1004, 715, "861", 14, MD],
  [882, 737, "3075", 15, MD], [1288, 752, "246", 13, DK], [1397, 789, "246", 13, DK], [722, 856, "615", 17, LT],
  [879, 871, "615", 13, DK], [1059, 869, "1107", 14, DK], [1174, 891, "1107", 15, MD], [1384, 875, "492", 13, DK],
  [281, 874, "123", 13, DK], [173, 951, "246", 13, DK], [186, 1028, "1722", 13, DK], [308, 1033, "2583", 13, DK],
  [603, 1009, "123", 13, DK], [713, 1053, "1230", 13, DK], [857, 1065, "1230", 13, MD], [1059, 1065, "738", 13, DK],
  [1171, 1030, "369", 13, DK], [1378, 1058, "369", 15, MD], [190, 1181, "246", 17, LT], [860, 1161, "861", 13, DK],
  [334, 1257, "246", 22, "#abd48a"], [1041, 1217, "1107", 14, MD], [1182, 1260, "615", 13, DK], [923, 1320, "123", 13, DK],
  [988, 1357, "492", 14, MD], [323, 1394, "369", 13, DK], [228, 1433, "123", 16, MD], [321, 1607, "123", 13, DK],
  [1480, 556, "1230", 28, "#f2efbe"],
];

function WorldMap() {
  return (
    <svg className="absolute inset-0 h-full w-full" viewBox="114 376 1364 1424" preserveAspectRatio="xMinYMin slice" role="img" aria-label="Map of clustered confirmed cases">
      <rect x="114" y="376" width="1364" height="1424" fill="#c4d8f0" />
      {land.map(([t, d], i) => (
        <g key={i} transform="translate(-5 -2)">
          <path transform={t} d={d} fill="#a5c7ef" />
        </g>
      ))}
      {land.map(([t, d], i) => (
        <path key={i} transform={t} d={d} fill="#f7f4ef" />
      ))}
      {ice.map(([t, d], i) => (
        <path key={i} transform={t} d={d} fill="#ffffff" />
      ))}
      {water.map(([t, d], i) => (
        <path key={i} transform={t} d={d} fill="#c0d6f0" />
      ))}
      {borders.map(([t, d], i) => (
        <path key={i} transform={t} d={d} fill="none" stroke="#a3a1b2" strokeWidth="2" strokeLinejoin="round" vectorEffect="non-scaling-stroke" />
      ))}
      {dashed.map(([t, d], i) => (
        <path key={i} transform={t} d={d} fill="none" stroke="#b1afbd" strokeWidth="1.500" strokeDasharray="5 2 2 2" vectorEffect="non-scaling-stroke" />
      ))}
      <g fontFamily="Noto Sans, sans-serif" textAnchor="middle" strokeLinejoin="round" style={{ paintOrder: "stroke" }}>
        {oceans.map(([x, y, t, s], i) => (
          <text key={i} x={x} y={y + s * 0.36} fontSize={s} fontStyle="italic" fontWeight="500" fill="#7eaee8" stroke="#eaf2fb" strokeWidth="4" className="tracking-[0.16em]">
            {t}
          </text>
        ))}
        {countries.map(([x, y, t]) => (
          <text key={t} x={x} y={y + 8} fontSize="23" fontWeight="700" fill="#34344a" stroke="#faf8f5" strokeWidth="4">
            {t}
          </text>
        ))}
        {clusters.map(([x, y, t, r, c], i) => (
          <g key={i}>
            <circle cx={x} cy={y} r={r} fill={c} />
            <text x={x} y={y + 9} fontSize="26" fill="#444444" stroke="#ffffff" strokeOpacity="0.7" strokeWidth="3">
              {t}
            </text>
          </g>
        ))}
      </g>
    </svg>
  );
}

const floatShadow = "shadow-[0_12px_24px_rgba(65,70,90,0.25),0_30px_60px_rgba(65,70,90,0.22)]";

function MapPanel() {
  return (
    <Panel title="confirmed_case" className="min-w-0 rounded-b-none border-b-0">
      <div className="relative flex-1 overflow-hidden">
        <WorldMap />
        <div className="absolute left-6 top-6 flex w-16 flex-col gap-4">
          <div className={"flex h-32 flex-col rounded-lg bg-white " + floatShadow}>
            <button aria-label="Zoom in" className="flex flex-1 items-center justify-center">
              <svg className="h-8 w-8" viewBox="0 0 32 32" aria-hidden="true">
                <circle cx="16" cy="16" r="15" fill="#343741" />
                <path d="M7 16h18M16 7v18" stroke="#fff" strokeWidth="2" />
              </svg>
            </button>
            <button aria-label="Zoom out" className="flex flex-1 items-center justify-center">
              <svg className="h-8 w-8" viewBox="0 0 32 32" aria-hidden="true">
                <circle cx="16" cy="16" r="15" fill="#343741" />
                <path d="M7 16h18" stroke="#fff" strokeWidth="2" />
              </svg>
            </button>
          </div>
          <button aria-label="Fit to data bounds" className={"flex h-16 items-center justify-center rounded-lg bg-white " + floatShadow}>
            <svg className="h-8 w-8" viewBox="0 0 32 32" fill="none" stroke="#343741" strokeWidth="2" aria-hidden="true">
              <circle cx="16" cy="16" r="12" strokeDasharray="12.850 6" strokeDashoffset="-3" />
              <path d="M16 1v7M16 24v7M1 16h7M24 16h7" />
              <circle cx="16" cy="16" r="2" fill="#343741" stroke="none" />
            </svg>
          </button>
          <button aria-label="Tools" className={"flex h-16 items-center justify-center rounded-lg bg-white " + floatShadow}>
            <svg className="h-8 w-8" viewBox="0 0 32 32" fill="none" stroke="#343741" strokeWidth="2" strokeLinejoin="round" aria-hidden="true">
              <path d="M11 1.500C5-.5-.5 5.500 1.500 11.500L3 9l4 2 3-3-2-4zM1.500 11.500C2.500 17 8 19.500 12.500 18L24 29.500c4 3.500 9.500-2 6-6L19 12.500C20.500 8 17.500 2 11 1.500" />
              <path d="M12.500 18l6.500-5.500" />
              <circle cx="25.500" cy="25" r="1.500" fill="#343741" stroke="none" />
            </svg>
          </button>
        </div>
        <div className={"absolute right-6 top-6 h-[268px] w-[640px] rounded-lg bg-white " + floatShadow}>
          <div className="flex h-[68px] items-center justify-between border-b-2 border-[#f5f7fa] pl-[34px] pr-[18px]">
            <h3 className="text-2xl font-bold text-[#1a1c21]">LAYERS</h3>
            <button aria-label="Collapse layers">
              <CollapseIcon className="h-8 w-8" />
            </button>
          </div>
          <button className="flex h-[82px] w-full items-center gap-4 border-b-2 border-[#f5f7fa] pl-5 text-[28px] font-medium text-[#343741]">
            <span className="h-[30px] w-8 rounded-md bg-[#fdfbc4]" />
            Clustered confirmed cases
          </button>
          <button className="flex h-[82px] w-full items-center gap-4 border-b-2 border-[#f5f7fa] pl-5 text-[28px] font-medium text-[#343741]">
            <svg className="h-8 w-8" viewBox="0 0 32 32" fill="none" stroke="#343741" strokeWidth="2" aria-hidden="true">
              {[0, 1, 2, 3, 4, 5, 6, 7, 8].map((i) => (
                <rect key={i} x={3 + (i % 3) * 10} y={3 + Math.floor(i / 3) * 10} width="6" height="6" />
              ))}
            </svg>
            Road map
          </button>
        </div>
        <p className="absolute bottom-2 right-6 text-[21px] font-semibold leading-7 text-[#343741]">
          Elastic Maps Service, OpenMapTiles, OpenStreetMap contributors
        </p>
        <span className="absolute bottom-0 right-4 h-[7px] w-1 bg-[#69707d]" />
      </div>
    </Panel>
  );
}

/* ---------- metrics ---------- */

const metrics: { value: string; country: string; small?: boolean }[] = [
  { value: "1,897,380", country: "US", small: true },
  { value: "240,978", country: "Spain" },
  { value: "234,531", country: "Italy" },
  { value: "614,941", country: "Brazil" },
  { value: "284,734", country: "United Kingdom" },
  { value: "449,256", country: "Russia" },
];

function MetricsPanel() {
  return (
    <Panel title="top10_confirmed_countries_metrics" className="h-[656px] shrink-0">
      <div className="flex min-h-0 flex-1 overflow-hidden pl-4 pr-3 pt-3">
        <div className="grid flex-1 auto-rows-[308px] grid-cols-3 pr-7">
          {metrics.map((m) => (
            <div
              key={m.country}
              className={"flex flex-col items-center justify-center whitespace-nowrap text-[#4a4a4a] " + (m.small ? "" : "pb-1.5")}
            >
              <div className={m.small ? "text-[34px] leading-9 text-[#999999]" : "text-[38px] leading-10 text-[#999999]"}>Sum of confirmed</div>
              <div className={m.small ? "text-[70px] font-bold leading-[76px]" : "text-[79px] font-bold leading-[88px]"}>{m.value}</div>
              <div className={m.small ? "text-lg leading-9" : "text-xl leading-9"}>{m.country}</div>
            </div>
          ))}
        </div>
        <span className="h-[270px] w-2 bg-[#b2b5be]" />
      </div>
      <span className="absolute bottom-4 right-[14px] h-3 w-3 border-b-4 border-r-4 border-[#69707d]" />
    </Panel>
  );
}

/* ---------- lens chart ---------- */

const GREEN = "#6db39b";
const BLUE = "#6992c2";
const MAGENTA = "#c7658b";
const PURPLE = "#9072b5";
const MAUVE = "#c08fac";
const YELLOW = "#d3c062";
const TAN = "#b6a78a";
const ORANGE = "#d08b50";
const RED = "#db6c50";
const BROWN = "#a4685a";

function series(points: Pt[]): Pt[] {
  const out: Pt[] = [];
  for (let i = 0; i < points.length - 1; i++) {
    const [d0, v0] = points[i];
    const [d1, v1] = points[i + 1];
    for (let d = d0; d < d1; d++) out.push([d, v0 + ((v1 - v0) * (d - d0)) / (d1 - d0)]);
  }
  return out;
}

const X = (day: number) => 1724 + day * 6.01;
const Y = (value: number) => 1683 - value / 3202;

const lines: [string, Pt[]][] = [
  [GREEN, [[51, 92000], [53, 122000], [55, 162000], [57, 214000], [59, 276000], [62, 367000], [65, 462000], [68, 555000], [70, 607000], [73, 700000], [76, 784000], [80, 905000], [83, 988000], [86, 1069424], [90, 1180000], [100, 1420000]]],
  [BLUE, [[40, 3000], [46, 20000], [52, 64000], [57, 104000], [64, 150000], [71, 188000], [79, 215000], [80, 205000], [86, 213435], [100, 230000]]],
  [MAGENTA, [[28, 2000], [35, 12000], [41, 31000], [46, 53000], [52, 86000], [60, 125000], [68, 156000], [76, 181000], [86, 205463], [100, 222000]]],
  [MAUVE, [[50, 15000], [60, 45000], [70, 90000], [78, 138000], [86, 172481], [100, 230000]]],
  [TAN, [[42, 12000], [50, 40000], [57, 78000], [65, 118000], [72, 134000], [86, 163009], [100, 175000]]],
  [ORANGE, [[44, 10000], [50, 28000], [57, 57000], [66, 118000], [70, 131000], [72, 147000], [80, 158000], [86, 167299], [100, 176000]]],
  [BROWN, [[0, 23000], [4, 37000], [8, 45000], [9, 62000], [12, 70000], [20, 77000], [30, 80500], [50, 82000], [100, 83956]]],
  [RED, [[50, 6000], [60, 30000], [68, 57000], [76, 91000], [86, 120204], [100, 139000]]],
  [ORANGE, [[52, 2000], [60, 11000], [68, 24000], [76, 45000], [86, 62996], [100, 82000]]],
  [BLUE, [[46, 2000], [60, 15000], [70, 21000], [86, 27000], [100, 31000]]],
];

const baseline: [number, number, string][] = [
  [0, 9, RED], [9, 11, GREEN], [11, 12, BLUE], [12, 15, MAGENTA], [15, 16, PURPLE], [16, 17, YELLOW], [17, 25, TAN], [25, 26, ORANGE],
  [26, 29, BROWN], [29, 30, RED], [30, 35, GREEN], [35, 36, BLUE], [36, 37, PURPLE], [37, 44, PURPLE], [44, 48, MAUVE], [48, 83, YELLOW], [83, 100, TAN],
];

const yTicks = ["1,800,000", "1,600,000", "1,400,000", "1,200,000", "1,000,000", "800,000", "600,000", "400,000", "200,000", "0"];
const xTicks = ["2020-02-09", "2020-03-08", "2020-04-05", "2020-05-03"];

function LensChart() {
  return (
    <svg className="absolute inset-0 h-full w-full" viewBox="1498 1048 1060 752" preserveAspectRatio="xMinYMin slice" fontFamily="Inter, sans-serif" role="img" aria-label="Sum of confirmed per day">
      <path d="M1724 1090V1668M2241 1090V1668" stroke="#eceef2" strokeWidth="2" />
      {yTicks.map((t, i) => (
        <text key={t} x="1684" y={1127 + i * 62.6} textAnchor="end" fontSize="20" fill="#69707d">{t}</text>
      ))}
      {xTicks.map((t, i) => (
        <text key={t} x={1754 + i * 168} y="1740" textAnchor="middle" fontSize="20" fill="#69707d">{t}</text>
      ))}
      <text transform="translate(1549 1386) rotate(-90)" textAnchor="middle" fontSize="24" fontWeight="700" fill="#343741">Sum of confirmed</text>
      <text x="2096" y="1783" textAnchor="middle" fontSize="24" fontWeight="700" fill="#343741">@timestamp per day</text>
      {lines.map(([color, pts], i) => (
        <g key={i} fill="#ffffff" stroke={color} strokeWidth="4">
          {series(pts).map(([d, v]) => (
            <circle key={d} cx={X(d)} cy={Y(v)} r="6" />
          ))}
        </g>
      ))}
      {baseline.map(([a, b, color]) => (
        <g key={a} fill="#ffffff" stroke={color} strokeWidth="4">
          {Array.from({ length: b - a }, (_, k) => (
            <circle key={k} cx={X(a + k)} cy={Y(Math.max(0, (a + k - 48) * 160))} r="6" />
          ))}
        </g>
      ))}
      <circle cx="2241" cy="1349" r="20" fill="none" stroke={GREEN} strokeWidth="8" />
    </svg>
  );
}

const legend = ["US", "Spain", "Italy", "Brazil", "United Kingdom", "Russia", "Germany", "France", "China", "Turkey", "China", "Philippines", "Afghanistan", "Albania"];

function LensPanel() {
  return (
    <Panel title="cov19-lens-vis" className="min-h-0 flex-1 rounded-b-none border-b-0">
      <div className="flex min-h-0 flex-1 overflow-hidden">
        <div className="relative min-w-0 flex-1">
          <LensChart />
        </div>
        <div className="relative flex w-[304px]">
          <ul className="w-[252px] pt-8">
            {legend.map((l, i) => (
              <li key={i} className={i === legend.length - 1 ? "opacity-60" : ""}>
                <button className="h-[52px] whitespace-nowrap pl-4 text-2xl text-[#343741]">{l}</button>
              </li>
            ))}
          </ul>
          <span className="mt-11 h-56 w-2 bg-[#b2b5be]" />
          <span className="absolute bottom-0 left-0 h-6 w-[252px] bg-linear-to-b from-white/0 to-white" />
        </div>
      </div>
      <span className="absolute bottom-0 right-[14px] h-[7px] w-1 bg-[#69707d]" />
    </Panel>
  );
}

const tooltipRows: [string, string, string][] = [
  ["Brazil", "6,006", "bg-[#b6a78a]"],
  ["Belgium", "7,594", "bg-[#d3c062]"],
  ["Germany", "6,623", "bg-[#c08fac]"],
  ["Netherlands", "4,811", "bg-[#9072b5]"],
  ["United Kingdom", "26,842", "bg-[#6992c2]"],
  ["Spain", "24,543", "bg-[#6db39b]"],
  ["US", "62,996", "bg-[#d08b50]"],
  ["Italy", "27,967", "bg-[#b6a78a]"],
  ["Iran", "6,028", "bg-[#9072b5]"],
  ["France", "24,379", "bg-[#6992c2]"],
  ["Turkey", "120,204", "bg-[#db6c50]"],
  ["China", "83,956", "bg-[#a4685a]"],
  ["France", "167,299", "bg-[#d08b50]"],
  ["Germany", "163,009", "bg-[#b6a78a]"],
  ["Russia", "106,498", "bg-[#d3c062]"],
  ["United Kingdom", "172,481", "bg-[#c08fac]"],
  ["Brazil", "87,187", "bg-[#9072b5]"],
  ["Italy", "205,463", "bg-[#c7658b]"],
  ["Spain", "213,435", "bg-[#6992c2]"],
  ["US", "1,069,424", "bg-[#6db39b]"],
];

function ChartTooltip() {
  return (
    <div role="tooltip" className="absolute left-[766px] top-[432px] z-20 w-[334px] rounded-lg bg-[#404040] pb-2 text-2xl text-white shadow-[0_12px_32px_rgba(0,0,0,0.3)]">
      <div className="h-[54px] border-b-2 border-[#595959] pl-4 font-semibold leading-[52px]">2020-04-30</div>
      <table className="mx-2 mt-2 w-[318px] table-fixed">
        <colgroup>
          <col className="w-2" />
          <col />
          <col className="w-[132px]" />
        </colgroup>
        <tbody>
          {tooltipRows.map(([name, value, color], i) => (
            <tr key={i} className={i === tooltipRows.length - 1 ? "h-12 bg-[#535353]" : "h-12"}>
              <td className="p-0">
                <div className={"h-12 w-2 " + color} />
              </td>
              <th scope="row" className="whitespace-nowrap py-0 pl-1.5 text-left font-normal">{name}</th>
              <td className="py-0 pr-1.5 text-right font-bold tabular-nums">{value}</td>
            </tr>
          ))}
        </tbody>
      </table>
    </div>
  );
}

export default function App() {
  return (
    <div className="flex h-screen flex-col overflow-hidden bg-[#fafbfd] font-[Inter,sans-serif]">
      <TabStrip />
      <Toolbar />
      <Bookmarks />
      <KibanaHeader />
      <div className="flex min-h-0 flex-1">
        <Sidebar />
        <main className="grid min-w-0 flex-1 grid-cols-2 grid-rows-1 gap-4 px-4 pt-1.5">
          <MapPanel />
          <div className="relative flex min-h-0 min-w-0 flex-col gap-4">
            <MetricsPanel />
            <LensPanel />
            <ChartTooltip />
          </div>
        </main>
      </div>
    </div>
  );
}
